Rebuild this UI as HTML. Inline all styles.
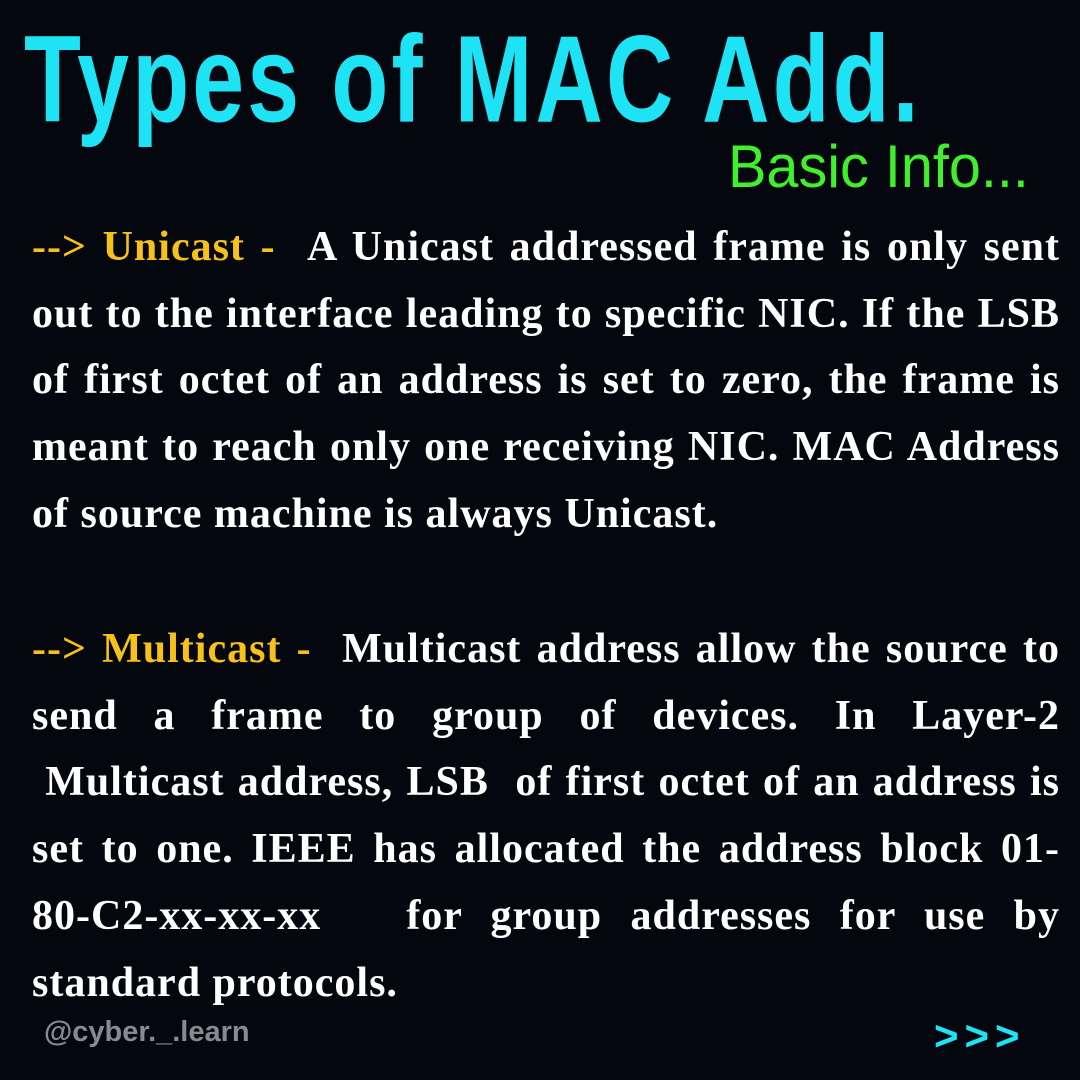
<!DOCTYPE html>
<html><head><meta charset="utf-8"><style>
body{margin:0;background:#05070f;width:1080px;height:1080px;overflow:hidden;position:relative;font-family:"Liberation Serif",serif}
.t{position:absolute;left:24px;top:8px;color:#1de3f5;font-family:"Liberation Sans",sans-serif;font-size:118px;font-weight:bold;transform:scaleX(0.79) scaleY(1.05);transform-origin:0 0;white-space:nowrap;letter-spacing:4px}
.s{position:absolute;left:728px;top:132px;color:#3ff02a;font-family:"Liberation Sans",sans-serif;font-size:60px;transform:scaleX(0.96);transform-origin:0 0;white-space:nowrap}
.p{position:absolute;left:32px;width:1028px;color:#fff;font-size:42px;font-weight:bold;line-height:66.7px;letter-spacing:1px}
.p div{text-align:justify;text-align-last:justify;white-space:nowrap;overflow:visible}
.p div.l{text-align-last:left}
.y{color:#f6c21a}
.f{position:absolute;left:44px;top:1016px;color:#8a8a8e;font-family:"Liberation Sans",sans-serif;font-weight:bold;font-size:29px}
.a{position:absolute;left:934px;top:1012px;color:#1de3f5;font-family:"Liberation Sans",sans-serif;font-weight:bold;font-size:42px;letter-spacing:6px}
</style></head><body>
<div class="t">Types of MAC Add.</div>
<div class="s">Basic Info...</div>
<div class="p" style="top:214px">
<div><span class="y">--&gt; Unicast - </span>&nbsp;A Unicast addressed frame is only sent</div>
<div>out to the interface leading to specific NIC. If the LSB</div>
<div>of first octet of an address is set to zero, the frame is</div>
<div>meant to reach only one receiving NIC. MAC Address</div>
<div class="l">of source machine is always Unicast.</div>
</div>
<div class="p" style="top:616px">
<div><span class="y">--&gt; Multicast - </span>&nbsp;Multicast address allow the source to</div>
<div>send a frame to group of devices. In Layer-2</div>
<div>&nbsp;Multicast address, LSB &nbsp;of first octet of an address is</div>
<div>set to one. IEEE has allocated the address block 01-</div>
<div>80-C2-xx-xx-xx &nbsp;&nbsp;for group addresses for use by</div>
<div class="l">standard protocols.</div>
</div>
<div class="f">@cyber._.learn</div>
<div class="a">&gt;&gt;&gt;</div>
</body></html>
